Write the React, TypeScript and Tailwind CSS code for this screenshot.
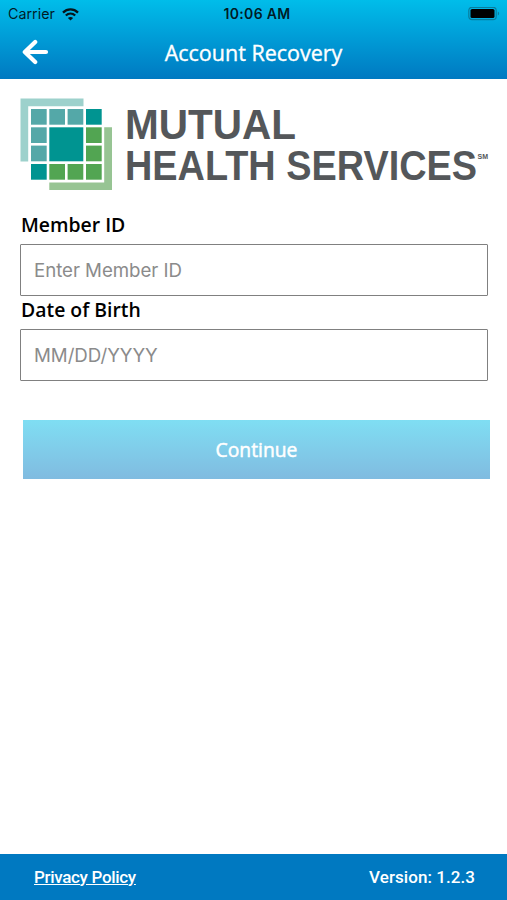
const tiles = [
  { x: 31, y: 109, fill: '#54a8a8' },
  { x: 49.3, y: 109, fill: '#54a8a8' },
  { x: 67.6, y: 109, fill: '#54a8a8' },
  { x: 86, y: 109, fill: '#009491' },
  { x: 31, y: 127.3, fill: '#54a8a8' },
  { x: 86, y: 127.3, fill: '#52a552' },
  { x: 31, y: 145.6, fill: '#54a8a8' },
  { x: 86, y: 145.6, fill: '#52a552' },
  { x: 31, y: 164, fill: '#009491' },
  { x: 49.3, y: 164, fill: '#52a552' },
  { x: 67.6, y: 164, fill: '#52a552' },
  { x: 86, y: 164, fill: '#52a552' },
];

function StatusBar() {
  return (
    <div className="grid h-7 grid-cols-3 items-center pl-2 pr-[7px] font-['Inter'] text-black/85">
      <div className="flex items-center gap-[7px]">
        <span className="text-[14.3px]">Carrier</span>
        <svg width="17" height="13" viewBox="0 0 17 13" fill="none" stroke="#06151c" strokeWidth="2.3">
          <path d="M1 4.6C5.3.4 11.7.4 16 4.6" />
          <path d="M3.8 7.5c2.7-2.5 6.7-2.5 9.4 0" />
          <path d="M8.5 12.6 5.9 10c1.5-1.3 3.7-1.3 5.2 0z" fill="#06151c" stroke="none" />
        </svg>
      </div>
      <span className="pb-0.5 pl-1.5 text-center text-[14px] font-semibold tracking-[0.35px] whitespace-nowrap">10:06 AM</span>
      <svg className="justify-self-end" width="32" height="14" viewBox="0 0 32 14">
        <rect x="0.8" y="0.3" width="27.4" height="12.4" rx="3.2" fill="none" stroke="#087e9e" strokeWidth="1.2" />
        <rect x="2.5" y="2" width="24" height="9" rx="1.6" fill="#000" />
        <path d="M29.8 4.5c1.8.7 1.8 3.3 0 4z" fill="#087e9e" />
      </svg>
    </div>
  );
}

function Header() {
  return (
    <header className="h-[79px] bg-linear-to-b from-[#00bdea] to-[#0079c1]">
      <StatusBar />
      <div className="grid h-12 grid-cols-[60px_1fr_60px] items-center">
        <button aria-label="Back" className="ml-[22px] w-[27px]">
          <svg width="27" height="26" viewBox="0 0 27 26" fill="none" stroke="#fff" strokeWidth="4.2" strokeLinecap="round" strokeLinejoin="round">
            <path d="M13.2 2.9 2.8 13l10.4 10.1M3.5 13H24" />
          </svg>
        </button>
        <h1 className="pt-[3px] text-center font-['Open_Sans'] text-[21.5px] text-white [-webkit-text-stroke:0.35px_white]">
          Account Recovery
        </h1>
      </div>
    </header>
  );
}

function Logo() {
  return (
    <svg className="block" width="507" height="100" viewBox="0 95 507 100">
      <path d="M20.5 98.5h63v7.7H28.2v55.3h-7.7z" fill="#9dd1cc" />
      <path d="M104.2 127.3h7.8V190H49.3v-7.6h54.9z" fill="#97c493" />
      {tiles.map((t) => (
        <rect key={`${t.x}-${t.y}`} x={t.x} y={t.y} width="15.7" height="15.7" fill={t.fill} />
      ))}
      <rect x="49.3" y="127.3" width="34" height="34" fill="#009491" />
      <g fill="#54575a" fontFamily="Liberation Sans, sans-serif" fontWeight="700">
        <text x="125" y="138.6" fontSize="42.5" textLength="171" lengthAdjust="spacingAndGlyphs">MUTUAL</text>
        <text x="125" y="180" fontSize="42.5" textLength="352" lengthAdjust="spacingAndGlyphs">HEALTH SERVICES</text>
        <text x="477.5" y="159" fontSize="6.5" textLength="10.5" lengthAdjust="spacingAndGlyphs">SM</text>
      </g>
    </svg>
  );
}

function Field({ id, label, placeholder }: { id: string; label: string; placeholder: string }) {
  return (
    <div className="h-[85px]">
      <label htmlFor={id} className="block h-[34px] pl-px font-['Open_Sans'] text-[19.4px] leading-[30px] font-semibold text-black">
        {label}
      </label>
      <input
        id={id}
        type="text"
        placeholder={placeholder}
        className="block h-[51.5px] w-[468px] rounded-[1px] border-[1.5px] border-[#808080] px-[13px] pt-0.5 font-['Inter'] text-[18.7px] tracking-[-0.05px] text-black placeholder:text-[#8b8b8b]"
      />
    </div>
  );
}

export default function App() {
  return (
    <div className="flex h-[900px] w-[507px] flex-col bg-white">
      <Header />
      <main className="flex-1 pt-4">
        <Logo />
        <form className="pt-[15px] pl-5">
          <Field id="member-id" label="Member ID" placeholder="Enter Member ID" />
          <Field id="dob" label="Date of Birth" placeholder="MM/DD/YYYY" />
          <button
            type="button"
            className="mt-10 ml-[3px] block h-[58.5px] w-[467px] bg-linear-to-b from-[#7fdef3] to-[#80bbe0] pt-0.5 font-['Open_Sans'] text-[19.3px] text-white [-webkit-text-stroke:0.5px_white]"
          >
            Continue
          </button>
        </form>
      </main>
      <footer className="flex h-[46px] items-center justify-between bg-[#0079c1] pt-px pr-8 pl-[34px] font-['Roboto'] text-[17px] font-medium text-white">
        <a href="#" className="tracking-[-0.32px] underline">Privacy Policy</a>
        <span className="tracking-[0.06px]">Version: 1.2.3</span>
      </footer>
    </div>
  );
}
